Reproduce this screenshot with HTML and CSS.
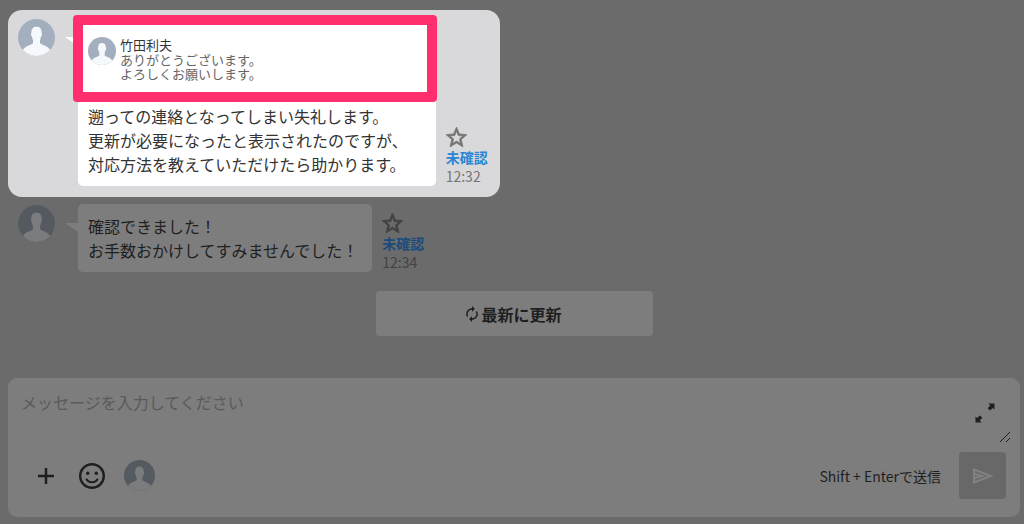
FILE: index.html
```
<!DOCTYPE html>
<html lang="ja">
<head>
<meta charset="utf-8">
<meta name="viewport" content="width=device-width, initial-scale=1">
<title>メッセージ</title>
<link rel="stylesheet" href="styles.css">
</head>
<body>
<svg class="defs" aria-hidden="true">
  <symbol id="person" viewBox="0 0 37 37">
    <clipPath id="round"><circle cx="18.500" cy="18.500" r="18.500"/></clipPath>
    <g clip-path="url(#round)">
      <rect class="person-back" width="37" height="37"/>
      <path class="person-body" d="M18.500 7.800C15 7.800 13.200 10 13.400 14C12.600 14.300 13 17.200 14.100 17.800C14.300 19.500 14.900 20.600 15 21.500V24C14 26 7.500 26.500 4.800 31L1 38H36L32.200 31C29.500 26.500 23 26 22 24V21.500C22.100 20.600 22.700 19.500 22.900 17.800C24 17.200 24.400 14.300 23.600 14C23.800 10 22 7.800 18.500 7.800Z"/>
    </g>
  </symbol>
  <symbol id="star" viewBox="2 2 20 20">
    <path fill="currentColor" stroke="currentColor" stroke-width=".7" d="M22 9.240l-7.190-.62L12 2 9.190 8.630 2 9.240l5.460 4.730L5.820 21 12 17.270 18.180 21l-1.630-7.030L22 9.240zM12 15.400l-3.760 2.270 1-4.280-3.320-2.880 4.380-.38L12 6.100l1.710 4.040 4.380.38-3.320 2.880 1 4.280L12 15.400z"/>
  </symbol>
</svg>
<main class="chat">
  <section class="thread">
    <article class="message message-focus">
      <svg class="avatar" role="img" aria-label="ユーザー"><use href="#person"/></svg>
      <div class="bubble">
        <blockquote class="quote">
          <svg class="avatar avatar-quote" aria-hidden="true"><use href="#person"/></svg>
          <div>
            <cite class="quote-name">竹田利夫</cite>
            <p class="quote-text">ありがとうございます。<br>よろしくお願いします。</p>
          </div>
        </blockquote>
        <p class="text">遡っての連絡となってしまい失礼します。<br>更新が必要になったと表示されたのですが、<br>対応方法を教えていただけたら助かります。</p>
      </div>
      <div class="meta">
        <button class="icon-button" type="button" aria-label="スター"><svg class="star"><use href="#star"/></svg></button>
        <a class="unread" href="#">未確認</a>
        <time class="time">12:32</time>
      </div>
    </article>
    <article class="message">
      <svg class="avatar" role="img" aria-label="ユーザー"><use href="#person"/></svg>
      <div class="bubble">
        <p class="text">確認できました！<br>お手数おかけしてすみませんでした！</p>
      </div>
      <div class="meta">
        <button class="icon-button" type="button" aria-label="スター"><svg class="star"><use href="#star"/></svg></button>
        <a class="unread" href="#">未確認</a>
        <time class="time">12:34</time>
      </div>
    </article>
  </section>
  <button class="refresh" type="button">
    <svg class="refresh-icon" viewBox="4 1 16 22" aria-hidden="true"><path fill="currentColor" d="M12 6v3l4-4-4-4v3c-4.420 0-8 3.580-8 8 0 1.570.46 3.030 1.240 4.260L6.700 14.800c-.45-.83-.7-1.790-.7-2.800 0-3.310 2.690-6 6-6zm6.760 1.740L17.300 9.200c.44.840.7 1.790.7 2.800 0 3.310-2.690 6-6 6v-3l-4 4 4 4v-3c4.420 0 8-3.580 8-8 0-1.570-.46-3.030-1.240-4.260z"/></svg>
    最新に更新
  </button>
  <form class="composer">
    <div class="entry">
      <textarea class="input" aria-label="メッセージ" placeholder="メッセージを入力してください"></textarea>
      <div class="entry-tools">
        <button class="icon-button" type="button" aria-label="拡大"><svg class="expand" viewBox="0 0 20 20"><path fill="currentColor" d="M13.500 .5H19.500V6.500L17.800 5L15.200 7.600L12.600 5.200L15.200 2.500ZM.5 19.500V13.500L2.200 15L4.800 12.400L7.400 14.800L4.800 17.500L6.500 19.500Z"/></svg></button>
        <svg class="grip" viewBox="0 0 12 12" aria-hidden="true"><path d="M1 11L11 1M7 11L11 7" stroke="currentColor"/></svg>
      </div>
    </div>
    <div class="actions">
      <button class="icon-button" type="button" aria-label="追加"><svg class="plus" viewBox="0 0 16 16"><path d="M8 0V16M0 8H16" stroke="currentColor" stroke-width="2.500"/></svg></button>
      <button class="icon-button" type="button" aria-label="絵文字"><svg class="smile" viewBox="0 0 26 26" fill="none" stroke="currentColor" stroke-width="2.400"><circle cx="13" cy="13" r="11.800"/><path d="M7.200 15.800C9.500 20.400 16.500 20.400 18.800 15.800" stroke-width="2"/><g fill="currentColor" stroke="none"><circle cx="8.700" cy="10.300" r="1.700"/><circle cx="17.300" cy="10.300" r="1.700"/></g></svg></button>
      <button class="icon-button" type="button" aria-label="送信者"><svg class="avatar avatar-sender"><use href="#person"/></svg></button>
      <span class="hint">Shift + Enterで送信</span>
      <button class="send" type="submit" aria-label="送信"><svg class="send-icon" viewBox="0 0 20 16" fill="none" stroke="currentColor" stroke-width="2"><path d="M1 1.500L18 8L1 14.500ZM1 5.800L9 8L1 10.200"/></svg></button>
    </div>
  </form>
</main>
</body>
</html>
```
FILE: styles.css
```
* {
  box-sizing: border-box;
}

body {
  --card: #7d7d7d;
  --ink: #1f1f1f;
  --muted: #424242;
  --link: #194b7c;
  --avatar: #555a61;
  --figure: #7a7c7e;
  margin: 0;
  background: #6b6b6b;
  color: var(--ink);
  font-family: "Noto Sans CJK JP", sans-serif;
  font-size: 16px;
}

p,
blockquote {
  margin: 0;
}

svg {
  display: block;
}

button,
textarea {
  padding: 0;
  border: 0;
  background: none;
  color: inherit;
  font: inherit;
}

.defs {
  position: absolute;
  width: 0;
  height: 0;
}

.chat {
  display: flex;
  flex-direction: column;
  min-height: 100vh;
  padding: 10px 4px 7px 8px;
}

.thread {
  display: flex;
  flex-direction: column;
  align-items: flex-start;
}

.message {
  display: flex;
  align-items: flex-start;
  padding: 7px 12px 0 10px;
  color: var(--ink);
}

.message-focus {
  --card: #ffffff;
  --ink: #333333;
  --muted: #757575;
  --link: #2a86d4;
  --avatar: #a3afbf;
  --figure: #f5f9fc;
  padding: 8px 12px 11px 10px;
  border-radius: 14px;
  background: #d9d9db;
}

.avatar {
  flex: none;
  width: 37px;
  height: 37px;
  margin-top: 1px;
}

.person-back {
  fill: var(--avatar);
}

.person-body {
  fill: var(--figure);
}

.bubble {
  position: relative;
  margin-left: 23px;
  padding: 10px 14px 10px 10px;
  border-radius: 5px;
  background: var(--card);
}

.bubble::before {
  content: "";
  position: absolute;
  top: 19px;
  left: -13px;
  border-style: solid;
  border-width: 0 13px 9px 0;
  border-color: transparent var(--card) transparent transparent;
}

.message-focus .bubble {
  padding-right: 28px;
}

.quote {
  position: relative;
  display: flex;
  gap: 4px;
  min-height: 76px;
  padding-top: 8px;
}

.quote::after {
  content: "";
  position: absolute;
  inset: -13px -29px 2px -15px;
  border: 10px solid #ff2e6c;
  border-radius: 4px;
}

.avatar-quote {
  width: 28px;
  height: 28px;
}

.quote-name {
  display: block;
  font-size: 13px;
  font-style: normal;
  line-height: 17px;
}

.quote-text {
  color: #666666;
  font-size: 13px;
  line-height: 14px;
}

.text {
  line-height: 24px;
}

.meta {
  display: flex;
  flex-direction: column;
  align-items: flex-start;
  align-self: flex-end;
  margin-left: 10px;
  color: var(--muted);
  font-size: 14px;
  line-height: 19px;
}

.icon-button {
  display: block;
}

.star {
  width: 21px;
  height: 21px;
}

.unread {
  color: var(--link);
  font-weight: 700;
  text-decoration: none;
}

.refresh {
  display: flex;
  align-items: center;
  justify-content: center;
  align-self: center;
  gap: 3px;
  width: 277px;
  min-height: 45px;
  margin: 19px 0 42px;
  border-radius: 4px;
  background: var(--card);
  font-weight: 700;
}

.refresh-icon {
  width: 12px;
  height: 16px;
}

.composer {
  display: flex;
  flex: 1;
  flex-direction: column;
  padding: 12px 14px 18px 13px;
  border-radius: 9px;
  background: var(--card);
}

.entry {
  display: flex;
  flex: 1;
}

.input {
  flex: 1;
  height: 56px;
  outline: none;
  line-height: 24px;
  resize: none;
}

.input::placeholder {
  color: #5a5a5a;
}

.entry-tools {
  display: flex;
  align-items: flex-end;
  padding: 13px 0 9px;
}

.entry-tools .icon-button {
  align-self: flex-start;
}

.expand {
  width: 20px;
  height: 20px;
}

.grip {
  width: 12px;
  height: 12px;
  margin: 0 -5px 0 4px;
}

.actions {
  display: flex;
  align-items: center;
  padding-left: 17px;
}

.actions .icon-button + .icon-button {
  margin-left: 25px;
}

.actions .icon-button + .icon-button + .icon-button {
  margin-left: 19px;
}

.plus {
  width: 16px;
  height: 16px;
}

.smile {
  width: 26px;
  height: 26px;
}

.avatar-sender {
  width: 31px;
  height: 31px;
  margin: 0;
}

.hint {
  margin-left: auto;
  font-size: 14px;
}

.send {
  display: grid;
  place-items: center;
  width: 47px;
  height: 47px;
  margin-left: 18px;
  border-radius: 4px;
  background: #686868;
  color: #828282;
}

.send-icon {
  width: 20px;
  height: 16px;
}
```
